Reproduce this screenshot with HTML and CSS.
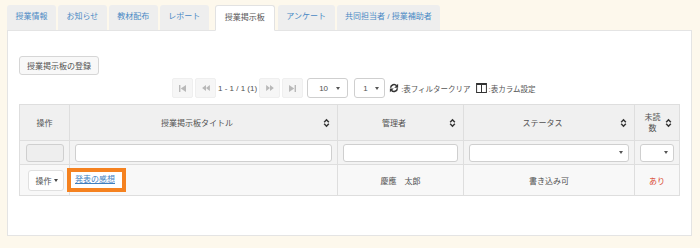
FILE: index.html
```html
<!DOCTYPE html>
<html lang="ja">
<head>
  <meta charset="UTF-8">
  <link rel="stylesheet" href="styles.css">
  <title>授業掲示板</title>
</head>
<body>
  <ul class="tabs">
    <li class="tab"><a href="#">授業情報</a></li>
    <li class="tab"><a href="#">お知らせ</a></li>
    <li class="tab"><a href="#">教材配布</a></li>
    <li class="tab"><a href="#">レポート</a></li>
    <li class="tab active"><a href="#">授業掲示板</a></li>
    <li class="tab"><a href="#">アンケート</a></li>
    <li class="tab"><a href="#">共同担当者 / 授業補助者</a></li>
  </ul>

  <div class="panel">
    <div class="toolbar">
      <button class="btn">授業掲示板の登録</button>
    </div>

    <div class="pager">
      <span class="pg-btn">
        <svg width="7" height="7" viewBox="0 0 8 8"><rect x="0" y="0" width="1.6" height="8" fill="#b9b9b9"/><polygon points="8,0 8,8 2,4" fill="#b9b9b9"/></svg>
      </span>
      <span class="pg-btn">
        <svg width="8" height="6" viewBox="0 0 9 7"><polygon points="4.5,0 4.5,7 0,3.5" fill="#b9b9b9"/><polygon points="9,0 9,7 4.5,3.5" fill="#b9b9b9"/></svg>
      </span>
      <span class="pg-info">1 - 1 / 1 (1)</span>
      <span class="pg-btn">
        <svg width="8" height="6" viewBox="0 0 9 7"><polygon points="0,0 0,7 4.5,3.5" fill="#b9b9b9"/><polygon points="4.5,0 4.5,7 9,3.5" fill="#b9b9b9"/></svg>
      </span>
      <span class="pg-btn">
        <svg width="7" height="7" viewBox="0 0 8 8"><polygon points="0,0 0,8 6,4" fill="#b9b9b9"/><rect x="6.4" y="0" width="1.6" height="8" fill="#b9b9b9"/></svg>
      </span>
      <span class="sel sel-size">10<i class="caret"></i></span>
      <span class="sel sel-page">1<i class="caret"></i></span>
      <span class="tool">
        <svg width="10" height="10" viewBox="0 0 16 16">
          <path d="M2.6 7.6 A5.4 5.4 0 0 1 12.2 4.4" fill="none" stroke="#333" stroke-width="2.4"/>
          <polygon points="14.6,1.2 14.6,7.4 8.4,7.4" fill="#333"/>
          <path d="M13.4 8.4 A5.4 5.4 0 0 1 3.8 11.6" fill="none" stroke="#333" stroke-width="2.4"/>
          <polygon points="1.4,14.8 1.4,8.6 7.6,8.6" fill="#333"/>
        </svg>
        :表フィルタークリア
      </span>
      <span class="tool">
        <svg width="11" height="10" viewBox="0 0 13 12">
          <rect x="0.6" y="0.6" width="11.8" height="10.8" fill="none" stroke="#333" stroke-width="1.2"/>
          <rect x="0.6" y="0.6" width="11.8" height="1.8" fill="#333"/>
          <rect x="5.9" y="0.6" width="1.2" height="10.8" fill="#333"/>
        </svg>
        :表カラム設定
      </span>
    </div>

    <table class="grid">
      <colgroup>
        <col class="c-op"><col class="c-title"><col class="c-admin"><col class="c-status"><col class="c-unread">
      </colgroup>
      <thead>
        <tr class="head">
          <th>操作</th>
          <th class="sortable">授業掲示板タイトル<svg class="sort" viewBox="0 0 8 12"><path d="M1.2 5 L4 2.2 L6.8 5 M1.2 7 L4 9.8 L6.8 7" fill="none" stroke="#333" stroke-width="1.8"/></svg></th>
          <th class="sortable">管理者<svg class="sort" viewBox="0 0 8 12"><path d="M1.2 5 L4 2.2 L6.8 5 M1.2 7 L4 9.8 L6.8 7" fill="none" stroke="#333" stroke-width="1.8"/></svg></th>
          <th class="sortable">ステータス<svg class="sort" viewBox="0 0 8 12"><path d="M1.2 5 L4 2.2 L6.8 5 M1.2 7 L4 9.8 L6.8 7" fill="none" stroke="#333" stroke-width="1.8"/></svg></th>
          <th class="sortable narrow">未読数<svg class="sort" viewBox="0 0 8 12"><path d="M1.2 5 L4 2.2 L6.8 5 M1.2 7 L4 9.8 L6.8 7" fill="none" stroke="#333" stroke-width="1.8"/></svg></th>
        </tr>
        <tr class="filter">
          <td><span class="field disabled"></span></td>
          <td><span class="field"></span></td>
          <td><span class="field"></span></td>
          <td><span class="field drop"><i class="caret"></i></span></td>
          <td><span class="field drop"><i class="caret"></i></span></td>
        </tr>
      </thead>
      <tbody>
        <tr class="row">
          <td><span class="btn btn-sm">操作<i class="caret"></i></span></td>
          <td class="left"><span class="mark"><a href="#">発表の感想</a></span></td>
          <td>慶應　太郎</td>
          <td>書き込み可</td>
          <td class="unread">あり</td>
        </tr>
      </tbody>
    </table>
  </div>
</body>
</html>
```

FILE: styles.css
```css
body {
  margin: 0;
  padding: 5px 8px 13px 7px;
  background-color: #fdf8ec;
  font-family: "Liberation Sans", "Noto Sans CJK JP", sans-serif;
  font-size: 8px;
  color: #505050;
}

/* tabs */
.tabs {
  display: flex;
  gap: 2px;
  list-style: none;
  margin: 0;
  padding: 0;
  height: 25px;
}

.tab a {
  display: block;
  height: 25px;
  line-height: 24px;
  padding: 0 8.5px;
  background-color: #eeeeee;
  color: #4a89c4;
  text-decoration: none;
  border-radius: 3px 3px 0 0;
  box-sizing: border-box;
}

.tab.active {
  margin: 0 1px 0 4px;
}

.tab.active a {
  background-color: #fff;
  color: #555;
  border: 1px solid #e2e2e2;
  border-bottom-color: #fff;
  padding: 0 9px;
  position: relative;
  z-index: 1;
  height: 26px;
}

/* panel */
.panel {
  background-color: #fff;
  border: 1px solid #e4e4e4;
  padding: 25px 12px 39px 11px;
}

.toolbar {
  display: flex;
}

.btn {
  font: inherit;
  color: #505050;
  background-color: #f8f8f8;
  border: 1px solid #d6d6d6;
  border-radius: 3px;
  height: 19px;
  padding: 0 7px;
  display: inline-flex;
  align-items: center;
}

/* pager */
.pager {
  display: flex;
  align-items: center;
  height: 20px;
  margin-top: 3px;
  padding-left: 153px;
}

.pg-btn {
  width: 21px;
  height: 20px;
  margin-right: 2px;
  display: flex;
  align-items: center;
  justify-content: center;
  background-color: #f6f6f6;
  border: 1px solid #efefef;
  border-radius: 2px;
  box-sizing: border-box;
}

.pg-info {
  margin: 0 2px 0 0;
  font-size: 8px;
}

.sel {
  height: 20px;
  box-sizing: border-box;
  border: 1px solid #cfcfcf;
  border-radius: 3px;
  display: flex;
  align-items: center;
  justify-content: space-between;
  background-color: #fff;
  font-size: 8px;
}

.sel-size {
  width: 41px;
  margin-left: 2px;
  padding: 0 7px 0 11px;
}

.sel-page {
  width: 31px;
  margin-left: 6px;
  padding: 0 5px 0 8px;
}

.caret {
  display: inline-block;
  width: 0;
  height: 0;
  border-left: 2.5px solid transparent;
  border-right: 2.5px solid transparent;
  border-top: 3.5px solid #555;
}

.tool {
  display: flex;
  align-items: center;
  gap: 2px;
  margin-left: 4px;
  font-size: 7.5px;
  color: #555;
}

.tool + .tool {
  margin-left: 5px;
}

/* table */
.grid {
  width: 660px;
  margin-top: 6px;
  border-collapse: collapse;
  table-layout: fixed;
}

.c-op { width: 50px; }
.c-title { width: 268px; }
.c-admin { width: 126px; }
.c-status { width: 171px; }
.c-unread { width: 45px; }

.grid th,
.grid td {
  border: 1px solid #dedede;
  text-align: center;
  vertical-align: middle;
  padding: 0 5px;
}

.head th {
  height: 35px;
  background-color: #f0f0f0;
  font-weight: normal;
  position: relative;
}

.head th.sortable {
  padding-right: 18px;
}

.head th.narrow {
  padding: 0 18px 0 9px;
  line-height: 11px;
}

.sort {
  position: absolute;
  right: 7px;
  top: 50%;
  width: 7px;
  height: 10px;
  margin-top: -5px;
}

.filter td {
  height: 23px;
  background-color: #f3f3f3;
}

.field {
  display: flex;
  align-items: center;
  justify-content: flex-end;
  height: 18px;
  box-sizing: border-box;
  border: 1px solid #cfcfcf;
  border-radius: 3px;
  background-color: #fff;
  padding-right: 5px;
}

.field.disabled {
  background-color: #eeeeee;
  margin-left: 1px;
}

.row td {
  height: 30px;
  background-color: #f8f8f8;
}

.row td.left {
  text-align: left;
  padding-left: 0;
}

.btn-sm {
  height: 19px;
  padding: 0 5px 0 7px;
  background-color: #fff;
  border-color: #e0e0e0;
  margin-left: 2px;
}

.btn-sm .caret {
  margin-left: 2px;
  border-top-color: #444;
}

.mark {
  display: inline-block;
  margin-left: -3px;
  border: 4px solid #f58220;
  background-color: #fff;
  padding: 3px 7px 3px 4px;
  line-height: 10px;
}

.mark a {
  color: #3f7fbf;
  text-decoration: underline;
}

.unread {
  color: #d9452e;
}
```
